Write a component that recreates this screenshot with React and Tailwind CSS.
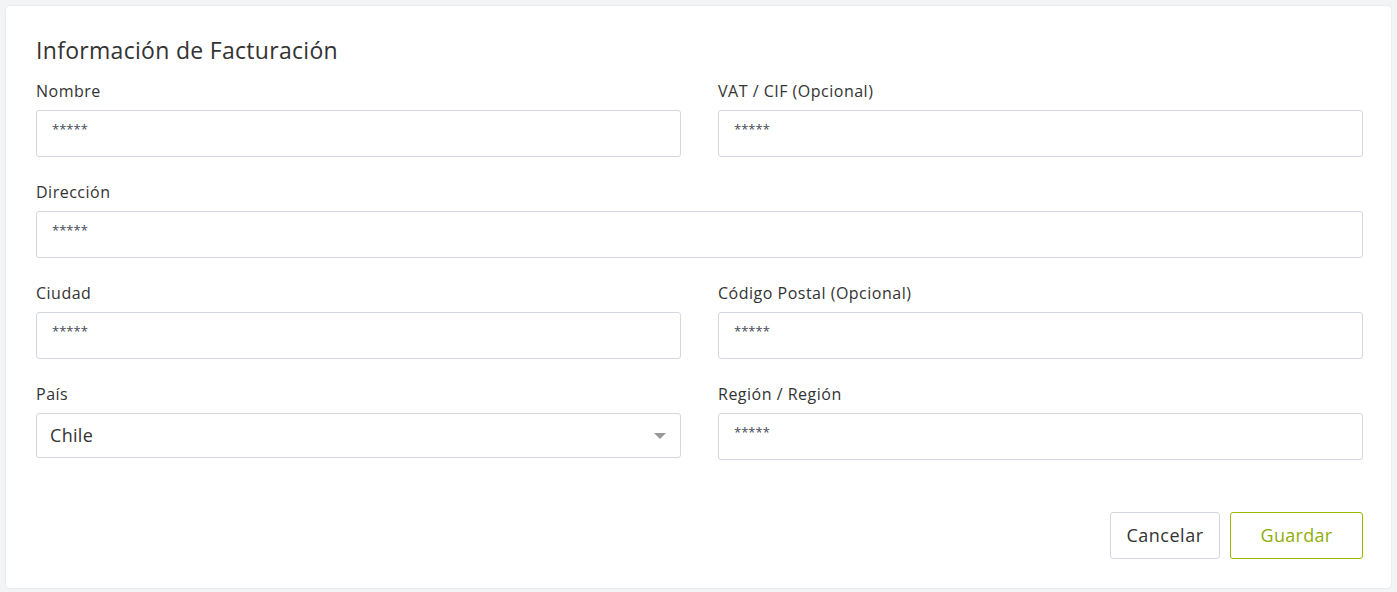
import React from 'react';

const Field = ({ label, value = '*****' }) => (
  <div className="flex flex-col">
    <label className="h-5 leading-5 text-[16px] tracking-[0.5px] text-[#333] mb-[9px]">{label}</label>
    <input
      type="text"
      defaultValue={value}
      className="h-[47px] w-full rounded-[3px] border border-[#d3d7de] bg-white px-[15px] pb-[9px] text-[13px] text-[#444a55] outline-none"
    />
  </div>
);

export default function App() {
  return (
    <div className="min-h-screen bg-[#f3f4f6] p-[6px] pb-[4px]" style={{ fontFamily: '"Open Sans", Lato, sans-serif' }}>
      <div className="rounded-[4px] bg-white pl-[30px] pr-[28px] pt-[31px] pb-[29px] shadow-[0_0_2px_rgba(0,0,0,0.12)]">
        <h2 className="mb-[17px] text-[23px] leading-[27px] tracking-[0.3px] text-[#333]">Información de Facturación</h2>
        <div className="grid grid-cols-2 gap-x-[37px] gap-y-[25px]">
          <Field label="Nombre" />
          <Field label="VAT / CIF (Opcional)" />
          <div className="col-span-2">
            <Field label="Dirección" />
          </div>
          <Field label="Ciudad" />
          <Field label="Código Postal (Opcional)" />
          <div className="flex flex-col">
            <label className="h-5 leading-5 text-[16px] tracking-[0.5px] text-[#333] mb-[9px]">País</label>
            <div className="relative flex h-[45px] items-center rounded-[3px] border border-[#d3d7de] bg-white px-[13px]">
              <span className="text-[18px] tracking-[0.3px] text-[#333]">Chile</span>
              <span className="absolute right-[14px] top-[19px] h-0 w-0 border-x-[6px] border-t-[6px] border-x-transparent border-t-[#999]" />
            </div>
          </div>
          <Field label="Región / Región" />
        </div>
        <div className="mt-[52px] flex justify-end gap-[10px]">
          <button className="h-[47px] w-[110px] rounded-[3px] border border-[#d3d7de] bg-white text-[18px] tracking-[0.5px] text-[#333]">Cancelar</button>
          <button className="h-[47px] w-[133px] rounded-[3px] border border-[#9ab800] bg-white text-[18px] tracking-[0.3px] text-[#8fae0a]">Guardar</button>
        </div>
      </div>
    </div>
  );
}
